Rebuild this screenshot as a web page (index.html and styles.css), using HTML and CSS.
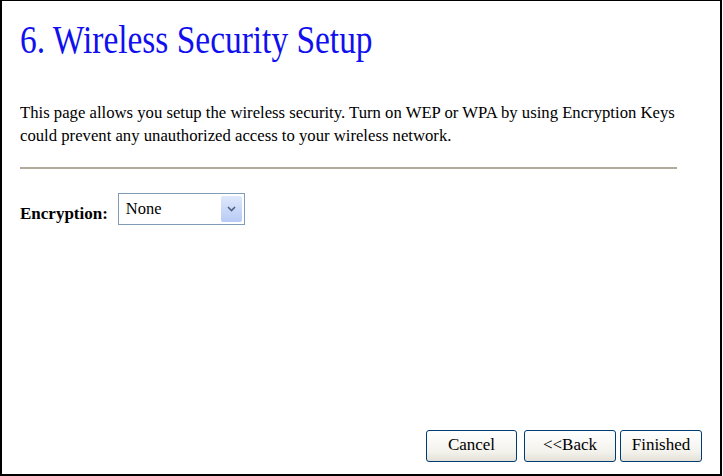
FILE: index.html
```html
<!DOCTYPE html>
<html lang="en">
<head>
  <meta charset="UTF-8" />
  <title>Wireless Security Setup</title>
  <link rel="stylesheet" href="styles.css">
</head>
<body>
  <div id="frame">
    <h1 class="title"><span>6. Wireless Security Setup</span></h1>
    <p class="intro">This page allows you setup the wireless security. Turn on WEP or WPA by using Encryption Keys could prevent any unauthorized access to your wireless network.</p>
    <div class="rule"></div>

    <!-- Encryption -->
    <div class="row">
      <label class="lbl" for="enc">Encryption:</label>
      <div class="select">
        <span class="value">None</span>
        <span class="arrow">
          <svg width="9" height="6" viewBox="0 0 9 6"><path d="M1 1 L4.5 4.5 L8 1" fill="none" stroke="#4d6185" stroke-width="1.6"/></svg>
        </span>
      </div>
    </div>

    <div class="spacer"></div>

    <!-- Buttons -->
    <div class="buttons">
      <button class="btn cancel">Cancel</button>
      <button class="btn back">&lt;&lt;Back</button>
      <button class="btn finish">Finished</button>
    </div>
  </div>
</body>
</html>
```

FILE: styles.css
```css
html, body {
  margin: 0;
  padding: 0;
  background: #fff;
}

body {
  font-family: "Liberation Serif", "DejaVu Serif", serif;
  color: #000;
}

#frame {
  box-sizing: border-box;
  width: 722px;
  height: 476px;
  border: 2px solid #000;
  border-top-width: 1px;
  padding: 0 0 0 18px;
  display: flex;
  flex-direction: column;
}

.title {
  margin: 16px 0 0 0;
  font-weight: normal;
  font-size: 41px;
  line-height: 44px;
  color: #1010ee;
}

.title span {
  display: inline-block;
  transform: scaleX(0.815);
  transform-origin: left center;
  white-space: nowrap;
}

.intro {
  margin: 40px 0 0 0;
  width: 664px;
  font-size: 16.7px;
  line-height: 23px;
}

.rule {
  margin-top: 20px;
  width: 657px;
  height: 2px;
  background: #b0ab9c;
}

.row {
  margin-top: 24px;
  display: flex;
  align-items: center;
}

.lbl {
  font-weight: bold;
  font-size: 17px;
  margin-right: 10px;
  margin-top: 9px;
}

.select {
  box-sizing: border-box;
  width: 127px;
  height: 32px;
  border: 1px solid #7f9db9;
  display: flex;
  align-items: flex-start;
  justify-content: space-between;
  padding: 2px;
}

.value {
  font-size: 16.5px;
  margin: 3px 0 0 5px;
}

.arrow {
  width: 21px;
  height: 26px;
  border-radius: 2px;
  background: linear-gradient(#dfe8fb, #b7caf5);
  display: flex;
  align-items: center;
  justify-content: center;
}

.spacer {
  flex: 1;
}

.buttons {
  display: flex;
  justify-content: flex-end;
  padding-right: 18px;
  margin-bottom: 12px;
}

.btn {
  height: 32px;
  border: 1px solid #003c74;
  border-radius: 3px;
  background: linear-gradient(#ffffff, #f3f2ec 70%, #e3e1d6);
  font-family: "Liberation Serif", serif;
  font-size: 17px;
  color: #000;
  padding: 0 0 2px 0;
}

.cancel { width: 91px; }
.back { width: 92px; margin-left: 7px; }
.finish { width: 82px; margin-left: 4px; }
```
